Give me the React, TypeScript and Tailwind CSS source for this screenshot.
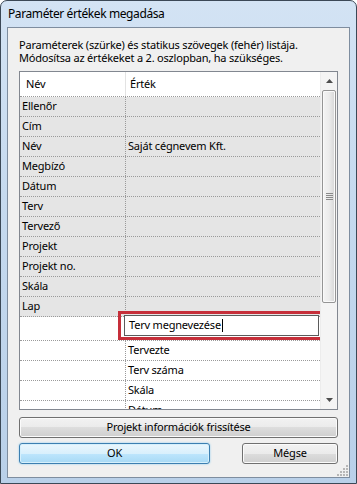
import React from "react";

type Row = { name: string; value?: string };

const grayRows: Row[] = [
  { name: "Ellenőr" },
  { name: "Cím" },
  { name: "Név", value: "Saját cégnevem Kft." },
  { name: "Megbízó" },
  { name: "Dátum" },
  { name: "Terv" },
  { name: "Tervező" },
  { name: "Projekt" },
  { name: "Projekt no." },
  { name: "Skála" },
  { name: "Lap" },
];

const whiteRows = ["Tervezte", "Terv száma", "Skála", "Dátum"];

const font = "font-['Noto_Sans',sans-serif]";

function GrayButton({ label, className = "" }: { label: string; className?: string }) {
  return (
    <div
      className={`h-[21px] flex items-center justify-center rounded-[3px] border border-[#707070] bg-[linear-gradient(#f2f2f2_0%,#ebebeb_50%,#dddddd_50%,#cfcfcf_100%)] shadow-[inset_0_0_0_1px_#fbfbfb] text-[11px] text-black ${className}`}
    >
      {label}
    </div>
  );
}

function Scrollbar() {
  return (
    <div className="w-[17px] flex flex-col bg-[#f4f4f4] border-l border-[#ececec]">
      {/* up arrow */}
      <div className="h-[18px] flex items-center justify-center">
        <svg width="7" height="4" viewBox="0 0 7 4">
          <path d="M0 4 L3.5 0 L7 4 Z" fill="#4d4d4d" />
        </svg>
      </div>
      {/* thumb */}
      <div className="mx-[1px] h-[213px] rounded-[2px] border border-[#959595] bg-[linear-gradient(90deg,#f4f4f4_0%,#ececec_50%,#d6d6d6_100%)] shadow-[inset_0_0_0_1px_#fafafa] flex items-center justify-center">
        <svg width="7" height="7" viewBox="0 0 7 7">
          <path d="M0 0.5 H7 M0 2.5 H7 M0 4.5 H7 M0 6.5 H7" stroke="#8a8a8a" strokeWidth="1" />
        </svg>
      </div>
      <div className="flex-1" />
      {/* down arrow */}
      <div className="h-[18px] flex items-center justify-center">
        <svg width="7" height="4" viewBox="0 0 7 4">
          <path d="M0 0 L7 0 L3.5 4 Z" fill="#4d4d4d" />
        </svg>
      </div>
    </div>
  );
}

export default function App() {
  return (
    <div className={`w-[357px] h-[484px] ${font} bg-white`}>
      <div className="w-[357px] h-[484px] flex flex-col rounded-t-[7px] border border-[#3b4856] bg-[linear-gradient(180deg,#d3e3f4_0%,#c6daef_40%,#b9d0e9_100%)] px-[6px] pb-[5px]">
        {/* Title bar */}
        <div className="h-[26px] flex items-center pl-[1px] text-[12px] tracking-[-0.4px] text-black">
          Paraméter értékek megadása
        </div>

        {/* Client area */}
        <div className="relative flex-1 flex flex-col border border-[#7e8d9f] bg-[#f0f0f0] px-[11px] pt-[10px] pb-[13px] text-[11px] tracking-[-0.2px] text-black">
          <div className="leading-[13px]">
            <div>Paraméterek (szürke) és statikus szövegek (fehér) listája.</div>
            <div>Módosítsa az értékeket a 2. oszlopban, ha szükséges.</div>
          </div>

          {/* Grid */}
          <div className="mt-[7px] h-[339px] flex border border-[#828790] bg-white overflow-hidden">
            <div className="flex-1 flex flex-col overflow-hidden">
              {/* Header */}
              <div className="h-[25px] shrink-0 flex border-b border-dotted border-[#9a9a9a] bg-white">
                <div className="w-[106px] flex items-center pl-[6px] border-r border-[#e3e3e3]">Név</div>
                <div className="flex-1 flex items-center pl-[4px]">Érték</div>
              </div>

              {grayRows.map((r, i) => (
                <div key={i} className="h-[20px] shrink-0 flex border-b border-dotted border-[#9a9a9a] bg-[#e5e5e5]">
                  <div className="w-[106px] flex items-center pl-[2px] border-r border-dotted border-[#9a9a9a]">{r.name}</div>
                  <div className="flex-1 flex items-center pl-[2px]">{r.value ?? ""}</div>
                </div>
              ))}

              {/* Editing row */}
              <div className="h-[24px] shrink-0 flex border-b border-dotted border-[#9a9a9a] bg-white">
                <div className="w-[106px] border-r border-dotted border-[#9a9a9a]" />
                <div className="relative flex-1 flex items-start">
                  <div className="mt-[-2px] ml-[-2px] mr-[1px] h-[21px] flex-1 flex items-center pl-[4px] border border-[#5b5b5b] bg-white">
                    <span>Terv megnevezése</span>
                    <span className="ml-[1px] w-[1px] h-[13px] bg-black" />
                  </div>
                  <div className="absolute top-[-6px] left-[-8px] right-[-3px] bottom-[0px] border-[3px] border-[#c62f3a] pointer-events-none" />
                </div>
              </div>

              {whiteRows.map((name, i) => (
                <div key={i} className="h-[20px] shrink-0 flex border-b border-dotted border-[#9a9a9a] bg-white">
                  <div className="w-[106px] border-r border-dotted border-[#9a9a9a]" />
                  <div className="flex-1 flex items-center pl-[2px]">{name}</div>
                </div>
              ))}
            </div>
            <Scrollbar />
          </div>

          <GrayButton label="Projekt információk frissítése" className="mt-[7px]" />

          <div className="mt-[5px] flex justify-between">
            <div className="w-[191px] h-[21px] flex items-center justify-center rounded-[3px] border border-[#3c7fb1] bg-[linear-gradient(#eaf6fd_0%,#d9f0fc_50%,#bee6fd_50%,#a7d9f5_100%)] shadow-[inset_0_0_0_1px_#d6f0fc,0_0_2px_#7fc6ee]">
              OK
            </div>
            <GrayButton label="Mégse" className="w-[96px]" />
          </div>

          {/* Resize grip */}
          <svg className="absolute right-[1px] bottom-[1px]" width="11" height="11" viewBox="0 0 11 11">
            {[
              [9, 1], [9, 4], [6, 4], [9, 7], [6, 7], [3, 7], [9, 10], [6, 10], [3, 10], [0, 10],
            ].map(([x, y], i) => (
              <rect key={i} x={x} y={y - 1} width="2" height="2" fill="#b7b7b7" />
            ))}
          </svg>
        </div>
      </div>
    </div>
  );
}
